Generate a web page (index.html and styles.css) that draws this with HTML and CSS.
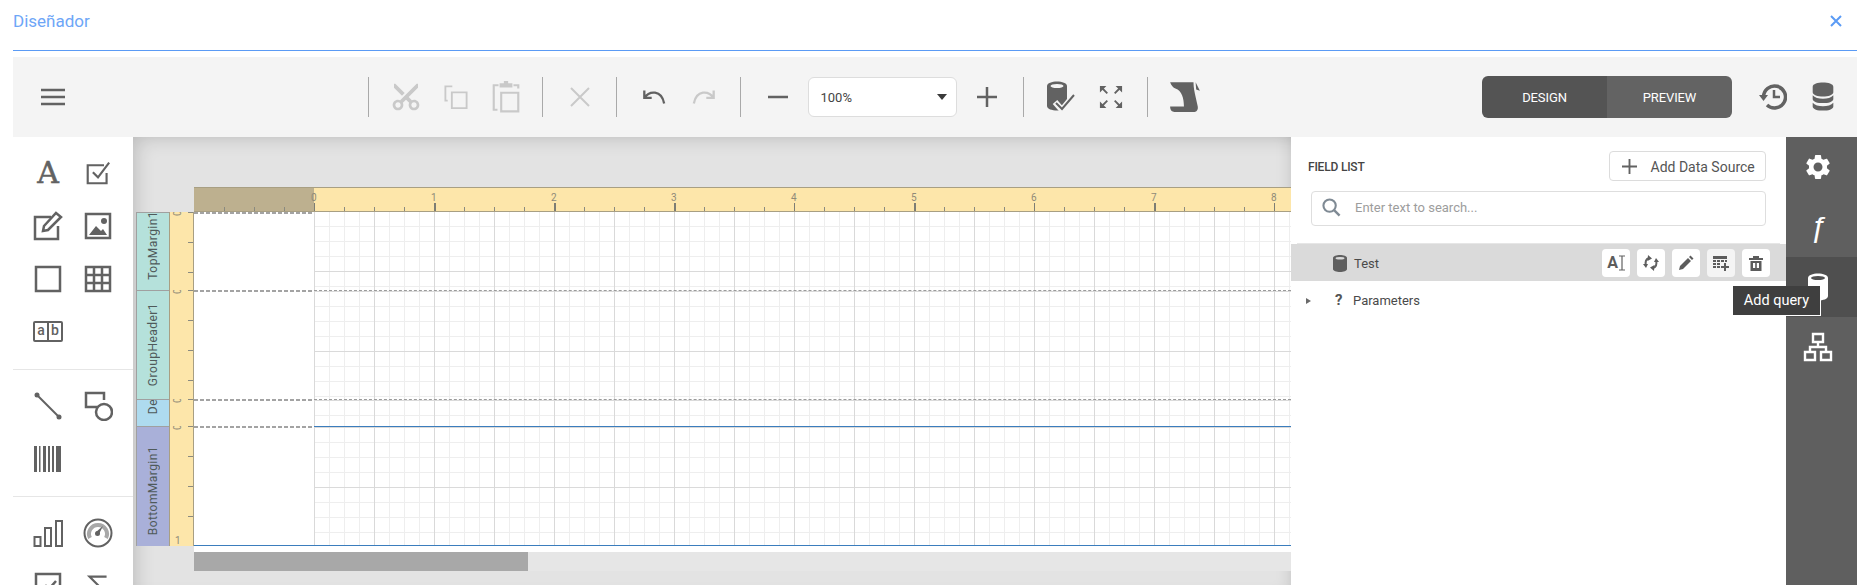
FILE: index.html
```html
<!DOCTYPE html>
<html lang="es">
<head>
<meta charset="utf-8">
<title>Diseñador</title>
<link rel="stylesheet" href="styles.css">
</head>
<body>
<div class="page">
  <header class="header">
    <span class="title">Diseñador</span>
    <svg class="close" viewBox="0 0 14 14"><path d="M2 2l10 10M12 2L2 12"/></svg>
  </header>

  <div class="toolbar">
    <button class="tb"><svg class="ic" viewBox="0 0 24 24"><path class="s25" d="M0 5h24M0 12h24M0 19h24"/></svg></button>
    <div class="sep first"></div>
    <button class="tb off"><svg class="ic cut" viewBox="0 0 24 24"><path transform="rotate(-90 12 12)" d="M9.64 7.64c.23-.5.36-1.05.36-1.64 0-2.21-1.79-4-4-4S2 3.79 2 6s1.79 4 4 4c.59 0 1.14-.13 1.64-.36L10 12l-2.36 2.36C7.14 14.13 6.59 14 6 14c-2.21 0-4 1.79-4 4s1.79 4 4 4 4-1.79 4-4c0-.59-.13-1.14-.36-1.64L12 14l7 7h3v-1L9.64 7.64zM6 8c-1.1 0-2-.89-2-2s.9-2 2-2 2 .89 2 2-.9 2-2 2zm0 12c-1.1 0-2-.89-2-2s.9-2 2-2 2 .89 2 2-.9 2-2 2zM19 3l-6 6 2 2 7-7V3z"/></svg></button>
    <button class="tb off"><svg class="ic" viewBox="0 0 26 26"><path class="s2" d="M9 1.500H1.500V17H4M8.500 8h16v17h-16z"/></svg></button>
    <button class="tb off"><svg class="ic tall" viewBox="0 0 26 30"><path class="s2" d="M6 4H1.500v23H5M20 4h4.500v3M8.500 11h16v17.500h-16z"/><path d="M7 2h4V0h4v2h4v4H7z"/></svg></button>
    <div class="sep"></div>
    <button class="tb off"><svg class="ic" viewBox="0 0 24 24"><path class="s2" d="M3 3l18 18M21 3L3 21"/></svg></button>
    <div class="sep"></div>
    <button class="tb"><svg class="ic" viewBox="0 0 26 20"><path class="s25" d="M2.500 3v8h8M2.500 11C8 3 21 2 24 17"/></svg></button>
    <button class="tb off"><svg class="ic" viewBox="0 0 26 20"><path class="s25" d="M23.500 3v8h-8M23.500 11C18 3 5 2 2 17"/></svg></button>
    <div class="sep"></div>
    <button class="tb"><svg class="ic" viewBox="0 0 24 24"><path class="s25" d="M2 12h20"/></svg></button>
    <div class="zoom-select"><span>100%</span><i class="caret"></i></div>
    <button class="tb"><svg class="ic" viewBox="0 0 24 24"><path class="s25" d="M2 12h20M12 2v20"/></svg></button>
    <div class="sep"></div>
    <button class="tb"><svg class="ic tall" viewBox="0 0 30 32"><path d="M1 5c0-6 20-6 20 0v20c0 6-20 6-20 0z"/><ellipse cx="11" cy="5" rx="6.500" ry="2" fill="#f4f4f4"/><path d="M9 21l7 8L29 13" fill="none" stroke="#f4f4f4" stroke-width="6"/><path class="s2" d="M10 22l6 6L28 14"/></svg></button>
    <button class="tb"><svg class="ic" viewBox="0 0 26 26"><path class="s2" d="M3 3l6 6M23 3l-6 6M3 23l6-6M23 23l-6-6"/><path d="M1 1h7L1 8zM25 1h-7l7 7zM1 25h7l-7-7zM25 25h-7l7-7z"/></svg></button>
    <div class="sep"></div>
    <button class="tb"><svg class="ic wide" viewBox="0 0 30 32"><path d="M1 2h22c0 5 1 9 2 14l2 9c.5 3-1 5-3 5H5c-2 0-4-1-4-5h13c0-8-2-15-8-17-2-1-4-3-5-6z"/><path d="M25 2l4 8-3.500-1z"/></svg></button>
    <div class="right-tools">
      <div class="toggle"><span class="tg active">DESIGN</span><span class="tg">PREVIEW</span></div>
      <button class="tb"><svg class="ic big" viewBox="0 0 28 30"><path class="s35" d="M4.500 15a11 11 0 1 1 3.500 8"/><path d="M0 13h9l-4.500 6z"/><path class="s25" d="M15 8v7h6"/></svg></button>
      <button class="tb"><svg class="ic big" viewBox="0 0 24 32"><path d="M1 5c0-6 22-6 22 0v6c0 6-22 6-22 0zM1 14c4 5 18 5 22 0v4c0 6-22 6-22 0zM1 22c4 5 18 5 22 0v4c0 6-22 6-22 0z"/></svg></button>
    </div>
  </div>

  <main class="main">
    <aside class="tools">
      <div class="tool-group">
        <div class="tool"><span class="glyph-a">A</span></div>
        <div class="tool"><svg class="ic" viewBox="0 0 28 28"><path class="s25" d="M21 5H2v21h22V14M8 13l6 6L27 2"/></svg></div>
        <div class="tool"><svg class="ic bigger" viewBox="0 0 30 30"><path class="s25" d="M18 6H2v22h23V15"/><path d="M11 15L23 2l5 4-13 13-5 1z" fill="none" stroke="#626262" stroke-width="2.500"/></svg></div>
        <div class="tool"><svg class="ic bigger" viewBox="0 0 30 30"><path class="s25" d="M3 3h24v24H3z"/><path d="M6 24l7-9 5 5 2-2 4 6z"/><circle cx="21" cy="10" r="3"/></svg></div>
        <div class="tool"><svg class="ic bigger" viewBox="0 0 30 30"><path class="s25" d="M3 3h24v24H3z"/></svg></div>
        <div class="tool"><svg class="ic bigger" viewBox="0 0 30 30"><path class="s25" d="M3 3h24v24H3zM3 11h24M3 19h24M11 3v24M19 3v24"/></svg></div>
        <div class="tool"><span class="glyph-ab"><b>a</b><b>b</b></span></div>
      </div>
      <hr class="tool-sep">
      <div class="tool-group">
        <div class="tool"><svg class="ic bigger" viewBox="0 0 30 30"><path class="s2" d="M4 4l22 22"/><circle cx="4" cy="4" r="2.500"/><circle cx="26" cy="26" r="2.500"/></svg></div>
        <div class="tool"><svg class="ic bigger" viewBox="0 0 30 30"><path class="s25" d="M14 16H3V2h18v7"/><circle cx="21" cy="21" r="8" fill="#fff" stroke="#626262" stroke-width="2.500"/></svg></div>
        <div class="tool"><svg class="ic bigger" viewBox="0 0 30 30"><path d="M1 2h3v26H1zM6 2h1.500v26H6zM10 2h3v26h-3zM15 2h2v26h-2zM19 2h2v26h-2zM23 2h5v26h-5z"/></svg></div>
      </div>
      <hr class="tool-sep">
      <div class="tool-group">
        <div class="tool"><svg class="ic bigger" viewBox="0 0 30 30"><path class="s2" d="M1.500 19h6v9h-6zM12 10h6v18h-6zM23 3h6v25h-6z"/></svg></div>
        <div class="tool"><svg class="ic bigger" viewBox="0 0 30 30"><circle cx="15" cy="15" r="13.500" fill="none" stroke="#626262" stroke-width="2"/><path d="M7 20a9 9 0 1 1 16 0" fill="none" stroke="#a8a8a8" stroke-width="4"/><path d="M13 14l7-6-4 8z"/><circle cx="14.500" cy="15.500" r="2.500"/></svg></div>
        <div class="tool"><svg class="ic bigger" viewBox="0 0 30 30"><path class="s25" d="M3 3h24v24H3zM7 21l6-6 3 3 7-8"/></svg></div>
        <div class="tool"><svg class="ic" viewBox="0 0 24 28"><path class="s25" d="M22 3H2l11 11L2 25h20"/></svg></div>
      </div>
    </aside>

    <section class="canvas">
      <div class="ruler-top">
        <div class="ruler-margin"></div>
        <div class="inch"><span>0</span></div>
        <div class="inch"><span>1</span></div>
        <div class="inch"><span>2</span></div>
        <div class="inch"><span>3</span></div>
        <div class="inch"><span>4</span></div>
        <div class="inch"><span>5</span></div>
        <div class="inch"><span>6</span></div>
        <div class="inch"><span>7</span></div>
        <div class="inch"><span>8</span></div>
      </div>
      <div class="band band-top">
        <div class="band-label teal pad-top"><span>TopMargin1</span></div>
        <div class="band-ruler"><span>0</span></div>
        <div class="band-body"><div class="margin-cell"></div><div class="grid"></div></div>
      </div>
      <div class="band band-group">
        <div class="band-label teal"><span>GroupHeader1</span></div>
        <div class="band-ruler"><span>0</span></div>
        <div class="band-body"><div class="margin-cell"></div><div class="grid"></div></div>
      </div>
      <div class="band band-detail">
        <div class="band-label blue pad-de"><span>De</span></div>
        <div class="band-ruler"><span>0</span></div>
        <div class="band-body"><div class="margin-cell"></div><div class="grid"></div></div>
      </div>
      <div class="band band-bottom">
        <div class="band-label violet pad-bottom"><span>BottomMargin1</span></div>
        <div class="band-ruler"><span>0</span><em>1</em></div>
        <div class="band-body"><div class="margin-cell"></div><div class="grid"></div></div>
      </div>
      <div class="scroll-gap"></div>
      <div class="scrollbar"><div class="thumb"></div></div>
    </section>

    <section class="panel">
      <div class="panel-head">
        <span class="panel-title">FIELD LIST</span>
        <button class="add-source"><svg viewBox="0 0 16 16"><path class="s2" d="M0 8h16M8 0v16"/></svg><span>Add Data Source</span></button>
      </div>
      <div class="search">
        <svg viewBox="0 0 20 20"><circle cx="8" cy="8" r="6.500" fill="none" stroke="#7f8a94" stroke-width="2.200"/><path d="M12.500 12.500l6 6" stroke="#7f8a94" stroke-width="2.500" fill="none"/></svg>
        <span>Enter text to search...</span>
      </div>
      <div class="row row-test">
        <svg class="row-ic" viewBox="0 0 14 17"><path d="M0 3c0-4 14-4 14 0v11c0 4-14 4-14 0z"/><ellipse cx="7" cy="3.200" rx="4.500" ry="1.300" fill="#dadada"/></svg>
        <span>Test</span>
        <div class="actions">
          <button class="act"><span class="glyph-ai">A</span><svg class="ibeam" viewBox="0 0 6 16"><path d="M0 1h6M0 15h6M3 1v14" stroke="#626262" stroke-width="1.200" fill="none"/></svg></button>
          <button class="act"><svg viewBox="0 0 16 16"><path class="s2" d="M6 3c-3 1-4 4-3 8M10 13c3-1 4-4 3-8"/><path d="M5 0l4 3.500L4.500 6zM11 16l-4-3.500 4.500-2.500zM0 9h5l-2 4zM16 7h-5l2-4z"/></svg></button>
          <button class="act"><svg viewBox="0 0 16 16"><path d="M1 15l1-4 8-8 3 3-8 8zM11 2l1.500-1.500 3 3L14 5z"/></svg></button>
          <button class="act hover"><svg viewBox="0 0 16 16"><path d="M0 1h14v3H0zM0 5h3v2H0zM4 5h3v2H4zM8 5h3v2H8zM12 5h2v2h-2zM0 8h3v2H0zM4 8h3v2H4zM0 11h3v2H0zM4 11h3v2H4zM11 8h2v3h3v2h-3v3h-2v-3H8v-2h3z"/></svg></button>
          <button class="act"><svg viewBox="0 0 16 16"><path d="M5 1h6v2h4v2H1V3h4zM2.500 6h11v10h-11zM5 8v5h6V8z" fill-rule="evenodd"/><path d="M7.200 8h1.600v5H7.200z"/></svg></button>
        </div>
      </div>
      <div class="row row-param">
        <i class="arrow"></i>
        <b class="qmark">?</b>
        <span>Parameters</span>
      </div>
    </section>

    <nav class="tabs">
      <div class="tab"><svg viewBox="0 0 24 24"><path fill-rule="evenodd" d="M19.140 12.940c.04-.3.06-.61.06-.94 0-.32-.02-.64-.07-.94l2.030-1.580c.18-.14.23-.41.12-.61l-1.920-3.320c-.12-.22-.37-.29-.59-.22l-2.390.96c-.5-.38-1.030-.7-1.620-.94l-.36-2.540c-.04-.24-.24-.41-.48-.41h-3.840c-.24 0-.43.17-.47.41l-.36 2.540c-.59.24-1.130.57-1.620.94l-2.390-.96c-.22-.08-.47 0-.59.22L2.740 8.870c-.12.21-.08.47.12.61l2.030 1.580c-.05.3-.09.63-.09.94s.02.64.07.94l-2.030 1.580c-.18.14-.23.41-.12.61l1.920 3.320c.12.22.37.29.59.22l2.390-.96c.5.38 1.030.7 1.620.94l.36 2.540c.05.24.24.41.48.41h3.840c.24 0 .44-.17.47-.41l.36-2.540c.59-.24 1.130-.56 1.620-.94l2.390.96c.22.08.47 0 .59-.22l1.920-3.320c.12-.22.07-.47-.12-.61l-2.010-1.580zM12 15.600c-1.980 0-3.600-1.620-3.600-3.600s1.620-3.600 3.600-3.600 3.600 1.620 3.600 3.600-1.620 3.600-3.600 3.600z"/></svg></div>
      <div class="tab"><span class="glyph-f">ƒ</span></div>
      <div class="tab selected"><svg viewBox="0 0 24 30"><path d="M2 6c0-6 20-6 20 0v18c0 6-20 6-20 0z"/><ellipse cx="12" cy="6" rx="7" ry="2" fill="#505050"/></svg></div>
      <div class="tab"><svg viewBox="0 0 30 30"><path d="M10 2h10v8H10zM2 20h10v8H2zM18 20h10v8H18zM15 10v5M7 20v-5h16v5" fill="none" stroke="#fff" stroke-width="2.400"/></svg></div>
    </nav>

    <div class="tooltip">Add query</div>
  </main>
</div>
</body>
</html>
```
FILE: styles.css
```css
* { box-sizing: border-box; }
html, body { margin: 0; height: 585px; overflow: hidden; background: #fff; }
body { font-family: Roboto, "Liberation Sans", sans-serif; color: #4a4a4a; }
button { border: 0; padding: 0; background: none; font: inherit; color: inherit; }

.page { padding-left: 13px; height: 585px; overflow: hidden; }

.header { height: 51px; border-bottom: 1px solid #5b9bf5; display: flex; align-items: center; justify-content: space-between; padding: 0 14px 8px 0; margin-bottom: 6px; }
.title { font-size: 17px; color: #6ea6f7; }
.close { width: 14px; height: 14px; }
.close path { stroke: #5b9bf5; stroke-width: 2; fill: none; }

.ic { width: 24px; height: 24px; fill: #626262; display: block; }
.ic.big { width: 28px; height: 30px; }
.ic.cut { width: 32px; height: 32px; }
.ic.bigger { width: 30px; height: 30px; }
.ic.tall { width: 30px; height: 32px; }
.ic.wide { width: 32px; height: 34px; }
.s2, .s25, .s35 { fill: none; stroke: #626262; }
.s2 { stroke-width: 2; }
.s25 { stroke-width: 2.5; }
.s35 { stroke-width: 3.5; }

.toolbar { height: 80px; background: #f4f4f4; display: flex; align-items: center; padding-left: 15px; }
.tb { width: 50px; height: 40px; display: flex; align-items: center; justify-content: center; flex: none; }
.tb.off .ic { fill: #c9c9c9; }
.tb.off .s2, .tb.off .s25 { stroke: #c9c9c9; }
.sep { width: 1px; height: 40px; background: #a9a9a9; margin: 0 11.5px; flex: none; }
.sep.first { margin-left: 290px; }
.zoom-select { width: 149px; height: 40px; margin: 0 5px; background: #fff; border: 1px solid #ddd; border-radius: 6px; display: flex; align-items: center; justify-content: space-between; padding: 0 9px 0 12px; font-size: 13px; color: #444; flex: none; }
.caret { width: 0; height: 0; border: 5px solid transparent; border-top: 6px solid #3a3a3a; border-bottom: 0; }
.right-tools { margin-left: auto; display: flex; align-items: center; padding-right: 9px; }
.toggle { display: flex; width: 250px; height: 42px; border-radius: 6px; overflow: hidden; margin-right: 16px; }
.tg { flex: 1; display: flex; align-items: center; justify-content: center; background: #636363; color: #fff; font-size: 13px; letter-spacing: -.1px; }
.tg.active { background: #545454; }

.main { display: flex; height: 448px; position: relative; }
.tools { width: 120px; flex: none; overflow: hidden; background: #fff; }
.tool-group { display: grid; grid-template-columns: 50px 50px; grid-auto-rows: 53px; padding: 9px 0 0 10px; }
.tool { display: flex; align-items: center; justify-content: center; }
.tool-sep { border: 0; border-top: 1px solid #e6e6e6; margin: 11px 0 0; }
.glyph-a { font-family: "DejaVu Serif", "Liberation Serif", serif; font-size: 30px; color: #626262; line-height: 1; -webkit-text-stroke: .5px #626262; }
.glyph-ab { display: flex; border: 2.5px solid #626262; border-radius: 2px; width: 30px; height: 21px; }
.glyph-ab b { flex: 1; font: 500 14px/15px Roboto, sans-serif; text-align: center; color: #626262; }
.glyph-ab b + b { border-left: 2px solid #626262; }

.canvas { flex: 1; min-width: 0; overflow: hidden; background: #e3e3e3; padding: 50px 0 0 3px; box-shadow: inset 14px 12px 20px -12px rgba(0,0,0,.18), inset -12px 0 16px -12px rgba(0,0,0,.15); }
.ruler-top { margin-left: 58px; height: 25px; display: flex; background: #fde6aa; border-top: 1px solid #a89f83; border-bottom: 1px solid #a89f83; }
.ruler-margin, .inch { flex: none; background-repeat: no-repeat; background-position: 0 100%; }
.ruler-margin { width: 120px; background-color: #bdb08f; background-image: repeating-linear-gradient(90deg, #8a8a80 0 1px, transparent 1px 30px); background-size: 100% 4px; background-position: 30px 100%; }
.inch { width: 120px; font-size: 10px; color: #8f8a78; line-height: 11px; padding-top: 4px; background-image: linear-gradient(90deg, #7d7d74 0 1.5px, transparent 1.5px), repeating-linear-gradient(90deg, #8a8a80 0 1px, transparent 1px 30px); background-size: 100% 8px, 100% 4px; }
.inch span { margin-left: -3px; }

.band { display: flex; }
.band-top { height: 78px; }
.band-group { height: 109px; }
.band-detail { height: 27px; }
.band-bottom { height: 120px; }
.band-label { width: 33px; flex: none; border: 1px solid #a0a0a0; border-bottom: 0; border-right: 0; display: flex; align-items: center; justify-content: center; overflow: hidden; font-size: 12px; color: #4f5a5a; letter-spacing: .45px; }
.band-label span { writing-mode: vertical-rl; transform: rotate(180deg); white-space: nowrap; }
.teal { background: #b5e1db; }
.blue { background: #aedbef; }
.violet { background: #a9b0d9; }
.pad-top { padding-bottom: 12px; }
.pad-de { padding-bottom: 12px; }
.pad-bottom { padding-top: 9px; }
.band-ruler { width: 25px; flex: none; background-color: #fde6aa; border-left: 1px solid #a89f83; border-right: 1px solid #a89f83; background-image: repeating-linear-gradient(180deg, #8a8a80 0 1px, transparent 1px 30px); background-repeat: no-repeat; background-position: 100% 0; background-size: 5px 100%; display: flex; flex-direction: column; justify-content: space-between; overflow: hidden; font-size: 10px; line-height: 10px; color: #8f8a78; }
.band-ruler span { display: block; transform: rotate(-90deg); width: 10px; margin: -6px 0 0 3px; }
.band-ruler em { font-style: normal; margin-left: 5px; }
.band-body { flex: 1; display: flex; min-width: 0; }
.margin-cell { width: 120px; flex: none; background: #fff repeating-linear-gradient(90deg, #a3a3a3 0 4px, transparent 4px 6px) 0 0 / 100% 2px no-repeat; }
.grid { flex: 1; background-color: #fff; border-top: 1px dashed #9a9a9a; background-image: linear-gradient(90deg, #d9d9d9 1.5px, transparent 1.5px), linear-gradient(#dadada 1px, transparent 1px), linear-gradient(90deg, #eeeeee 1px, transparent 1px), linear-gradient(#eeeeee 1px, transparent 1px); background-size: 60px 60px, 60px 60px, 15px 15px, 15px 15px; }
.band-top .grid { border-top: 0; background-position: 0 -1px; }
.band-bottom .grid { border-top: 1px solid #3b7dbd; }
.band-bottom .band-body { border-bottom: 1px solid #3b7dbd; }
.scroll-gap { margin-left: 58px; height: 6px; background: #fff; }
.scrollbar { margin-left: 58px; height: 19px; background: #e6e6e6; }
.thumb { width: 334px; height: 19px; background: #a8a8a8; }

.panel { width: 495px; flex: none; background: #fff; overflow: hidden; }
.panel-head { display: flex; justify-content: space-between; align-items: center; padding: 14px 20.5px 0 17px; }
.panel-title { font-size: 12px; font-weight: 500; color: #444; letter-spacing: -.2px; padding-top: 1px; }
.add-source { width: 157px; height: 30px; display: flex; align-items: center; background: #fff; border: 1px solid #dcdcdc; border-radius: 4px; padding: 1px 0 0 12px; font-size: 14px; color: #555; }
.add-source svg { width: 15px; height: 15px; margin-right: 14px; }
.search { margin: 10px 20.5px 0 20px; height: 35px; border: 1px solid #dedede; border-radius: 4px; display: flex; align-items: center; padding: 0 0 2px 10px; font-size: 13px; color: #9d9d9d; }
.search svg { width: 19px; height: 19px; margin-right: 14px; }
.row { display: flex; align-items: center; font-size: 13px; color: #4a4a4a; }
.row-test { margin-top: 18px; height: 37px; background: #dadada; padding: 1px 16px 0 42px; box-shadow: 0 -7px 0 -6px #e6e6e6; }
.row-ic { width: 14px; height: 17px; fill: #5f5f5f; margin-right: 7px; }
.actions { margin-left: auto; display: flex; gap: 7px; }
.act { width: 28px; height: 28px; background: #fff; border-radius: 4px; display: flex; align-items: center; justify-content: center; }
.act svg { width: 16px; height: 16px; fill: #5c5c5c; }
.act.hover { background: #f4f4f4; }
.act .ibeam { width: 6px; height: 16px; margin-left: 1px; }
.glyph-ai { font: 700 16px/1 Roboto, sans-serif; color: #5c5c5c; }
.row-param { height: 39px; padding-left: 15px; }
.arrow { width: 0; height: 0; border: 3.5px solid transparent; border-left: 5px solid #6a6a6a; border-right: 0; margin-right: 24px; }
.qmark { font: 700 15px/1 Roboto, sans-serif; color: #555; width: 18px; }

.tabs { width: 71px; flex: none; background: #5f5f5f; }
.tab { height: 60px; display: flex; align-items: center; justify-content: center; padding-right: 7px; }
.tab svg { width: 30px; height: 30px; fill: #fff; }
.tab.selected { background: #4f4f4f; }
.glyph-f { font: italic 30px/1 "Liberation Sans", sans-serif; color: #fff; }

.tooltip { position: absolute; right: 36px; top: 149px; height: 30px; padding: 0 11px; display: flex; align-items: center; background: #3f3f3f; color: #fff; font-size: 14.5px; border-right: 1px solid #fff; border-bottom: 1px solid #fff; }
```
